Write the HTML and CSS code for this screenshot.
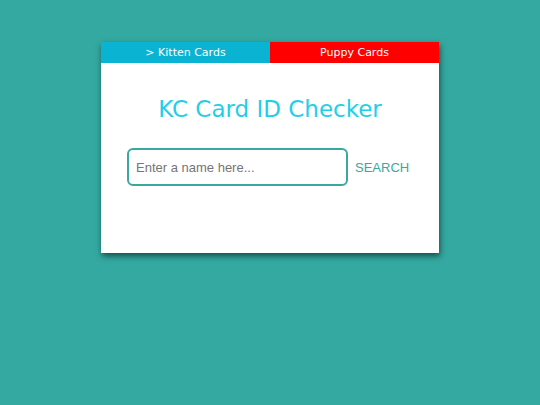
FILE: index.html
```html
<!DOCTYPE html>
<html>
<head>
<meta charset="utf-8">
<link rel="stylesheet" href="styles.css">
</head>
<body>
<div class="card">
  <div class="tabs">
    <div class="tab tab-kitten">&gt; Kitten Cards</div>
    <div class="tab tab-puppy">Puppy Cards</div>
  </div>
  <div class="content">
    <h1 class="title">KC Card ID Checker</h1>
    <div class="search-row">
      <input class="search-input" type="text" placeholder="Enter a name here...">
      <button class="search-btn">SEARCH</button>
    </div>
  </div>
</div>
</body>
</html>
```
FILE: styles.css
```css
html, body {
  margin: 0;
  padding: 0;
  background: #33a9a1;
  height: 100%;
}
.card {
  width: 338px;
  height: 211px;
  margin: 42px auto 0;
  background: #ffffff;
  box-shadow: 1px 3px 6px rgba(0, 0, 0, 0.55);
  display: flex;
  flex-direction: column;
}
.tabs {
  display: flex;
  height: 21px;
}
.tab {
  flex: 1;
  line-height: 21px;
  text-align: center;
  color: #ffffff;
  font-family: "DejaVu Sans", "Open Sans", sans-serif;
  font-size: 11px;
}
.tab-kitten { background: #0ab3d2; }
.tab-puppy { background: #ff0000; }
.content {
  display: flex;
  flex-direction: column;
  padding: 0 26px;
}
.title {
  margin: 0;
  padding-top: 34px;
  height: 58px;
  box-sizing: border-box;
  text-align: center;
  font-family: "DejaVu Sans", "Open Sans", sans-serif;
  font-weight: normal;
  font-size: 23px;
  line-height: 24px;
  color: #1fcfe9;
}
.search-row {
  display: flex;
  align-items: center;
  gap: 7px;
  margin-top: 27px;
}
.search-input {
  width: 221px;
  height: 38px;
  box-sizing: border-box;
  border: 2px solid #3aa8a0;
  border-radius: 6px;
  padding: 0 7px;
  font-family: "Liberation Sans", Arial, sans-serif;
  font-size: 13px;
  color: #333;
  outline: none;
}
.search-input::placeholder { color: #757575; }
.search-btn {
  background: none;
  border: none;
  padding: 0;
  font-family: "Liberation Sans", Arial, sans-serif;
  font-size: 13px;
  color: #3aa8a0;
  cursor: pointer;
}
```
